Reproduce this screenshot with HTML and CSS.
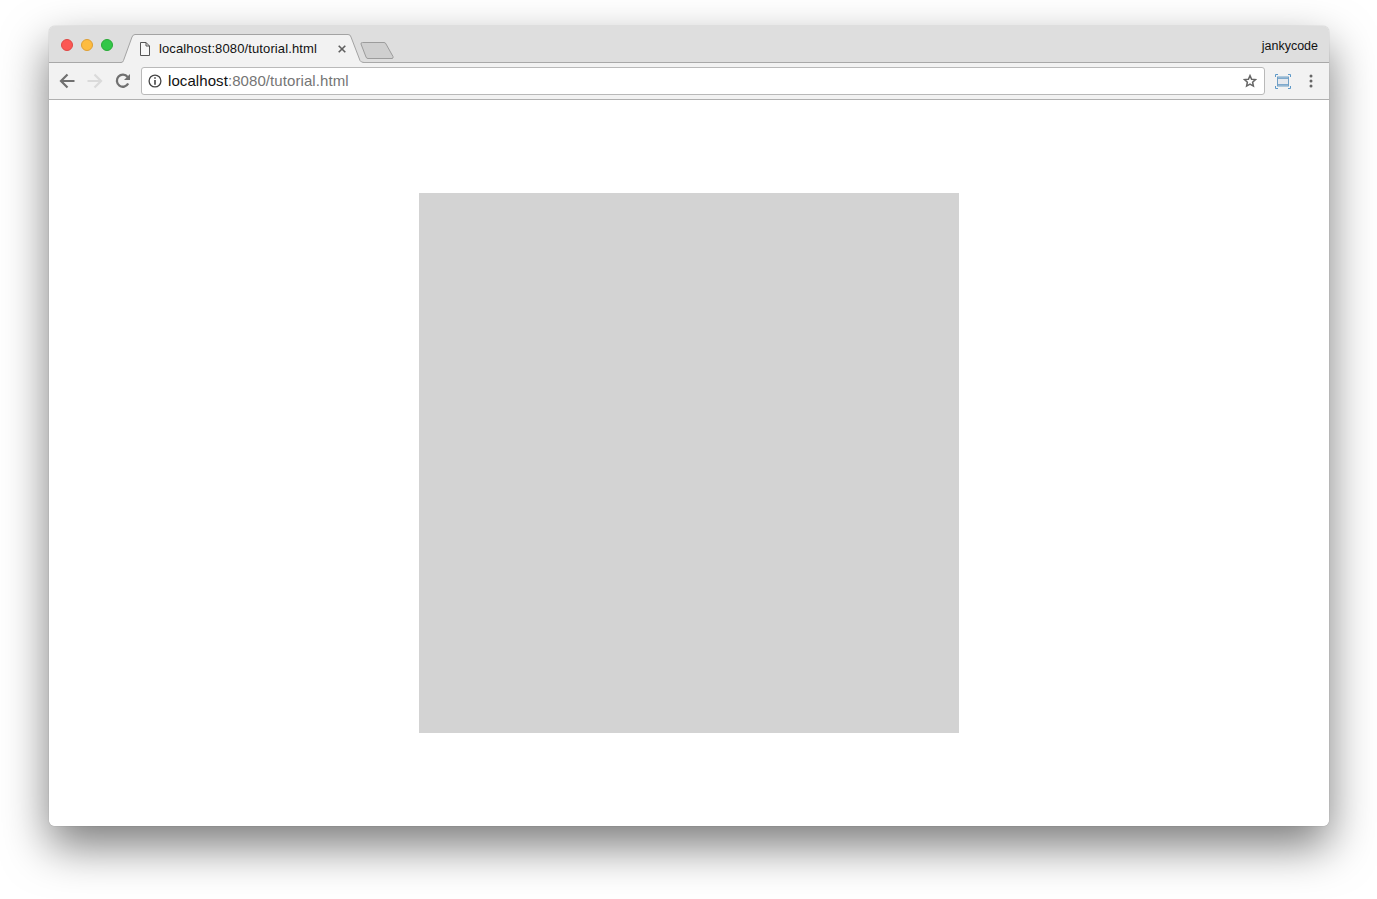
FILE: index.html
```html
<!DOCTYPE html>
<html lang="en">
<head>
    <meta charset="UTF-8">
    <meta name="viewport" content="width=device-width, initial-scale=1.0">
    <title>localhost:8080/tutorial.html</title>
    <link rel="stylesheet" href="styles.css">
</head>
<body>
    <div class="window">
        <div class="tabstrip">
            <div class="lights">
                <span class="light red"></span>
                <span class="light yellow"></span>
                <span class="light green"></span>
            </div>
            <div class="tab">
                <svg class="tab-shape" width="244" height="29" viewBox="0 0 244 29">
                    <path d="M0 28.5H1Q3 28.500 3.500 26.500L12 3Q13 .5 15 .5H228Q230.500 .5 231 3L240 26.500Q241 28.500 244 28.500V29H0Z" fill="#f2f2f2"/>
                    <path d="M0 28.500H1Q3 28.500 3.500 26.500L12 3Q13 .5 15 .5H228Q230.500 .5 231 3L240 26.500Q241 28.500 244 28.500" fill="none" stroke="#a3a3a3"/>
                </svg>
                <svg class="page-icon" width="10" height="14" viewBox="0 0 10 14">
                    <path d="M.5.5H6L9.500 4V13.500H.5ZM6 .5V4H9.500" fill="#f8f8f8" stroke="#555"/>
                </svg>
                <span class="tab-title">localhost:8080/tutorial.html</span>
                <svg class="tab-close" width="8" height="8" viewBox="0 0 8 8">
                    <path d="M.7.7 7.300 7.300M7.300.7.7 7.300" stroke="#5f5f5f" stroke-width="1.600"/>
                </svg>
            </div>
            <svg class="new-tab" width="34" height="17" viewBox="0 0 34 17">
                <path d="M1 2Q.7.5 2.500.5H24Q25.500.5 26 2L33 14.500Q33.500 16.500 32 16.500H8Q6.500 16.500 6 15Z" fill="#cfcfcf" stroke="#9c9c9c"/>
            </svg>
            <span class="profile">jankycode</span>
        </div>
        <div class="toolbar">
            <svg class="nav-icon" width="16" height="16" viewBox="0 0 16 16">
                <path d="M15.500 8H2M8.500 1.500 2 8l6.500 6.500" fill="none" stroke="#707070" stroke-width="2.200"/>
            </svg>
            <svg class="nav-icon" width="16" height="16" viewBox="0 0 16 16">
                <path d="M.5 8H14M7.500 1.500 14 8l-6.500 6.500" fill="none" stroke="#dadada" stroke-width="2.200"/>
            </svg>
            <svg class="nav-icon" width="16" height="16" viewBox="0 0 16 16">
                <path d="M13.200 10.500A6 6 0 1 1 12.600 4" fill="none" stroke="#707070" stroke-width="2.300"/>
                <path d="M15 1v6H9Z" fill="#707070"/>
            </svg>
            <div class="omnibox">
                <svg class="info-icon" width="14" height="14" viewBox="0 0 14 14">
                    <circle cx="7" cy="7" r="5.900" fill="none" stroke="#444" stroke-width="1.300"/>
                    <path d="M6.200 3.200h1.600v1.500H6.200ZM6.200 6h1.600v4.800H6.200Z" fill="#444"/>
                </svg>
                <span class="url"><span class="host">localhost</span>:8080/tutorial.html</span>
                <svg class="star-icon" width="14" height="14" viewBox="0 0 14 14">
                    <path d="M7 1.600 8.600 5.200l3.900.4-2.900 2.600.8 3.900L7 10.100l-3.400 2 .8-3.900-2.900-2.600 3.900-.4Z" fill="none" stroke="#666" stroke-width="1.500"/>
                </svg>
            </div>
            <svg class="cast-icon" width="16" height="15" viewBox="0 0 16 15">
                <rect x="2.500" y="3" width="11" height="9" fill="#e6e9ee" stroke="#6f9fc6"/>
                <rect x="3" y="3.500" width="10" height="1.500" fill="#7fa9cc"/>
                <rect x="3" y="10" width="10" height="1.500" fill="#7fa9cc"/>
                <path d="M.5 3V.5H3M13 .5h2.500V3M15.500 12v2.500H13M3 14.500H.5V12" fill="none" stroke="#5c98c8"/>
            </svg>
            <svg class="menu-icon" width="4" height="14" viewBox="0 0 4 14">
                <circle cx="2" cy="2" r="1.500" fill="#666"/>
                <circle cx="2" cy="7" r="1.500" fill="#666"/>
                <circle cx="2" cy="12" r="1.500" fill="#666"/>
            </svg>
        </div>
        <div class="content">
            <div class="square"></div>
        </div>
    </div>
</body>
</html>
```

FILE: styles.css
```css
html, body {
    margin: 0;
    height: 899px;
    overflow: hidden;
    background-color: #fff;
}
body {
    padding: 26px 48px 73px 49px;
    box-sizing: border-box;
    font-family: "Liberation Sans", Arial, sans-serif;
}
.window {
    height: 800px;
    border-radius: 6px;
    box-shadow: 0 20px 46px rgba(0, 0, 0, 0.52), 0 0 1px rgba(0, 0, 0, 0.4);
    background-color: #fff;
    display: flex;
    flex-direction: column;
}
.tabstrip {
    height: 37px;
    box-sizing: border-box;
    background-color: #dedede;
    border-bottom: 1px solid #a8a8a8;
    border-radius: 6px 6px 0 0;
    display: flex;
    align-items: flex-start;
    flex-shrink: 0;
}
.lights {
    display: flex;
    gap: 8px;
    padding: 13px 0 0 12px;
}
.light {
    width: 12px;
    height: 12px;
    border-radius: 50%;
    box-sizing: border-box;
}
.red {
    background-color: #fc5753;
    border: 1px solid #df4744;
}
.yellow {
    background-color: #fdbc40;
    border: 1px solid #de9f34;
}
.green {
    background-color: #33c748;
    border: 1px solid #27aa35;
}
.tab {
    position: relative;
    width: 244px;
    height: 29px;
    margin: 8px 0 0 7px;
    display: flex;
    align-items: center;
    font-size: 13px;
    letter-spacing: 0.12px;
    color: #111;
}
.tab-shape {
    position: absolute;
    left: 0;
    top: 0;
}
.page-icon {
    position: relative;
    margin: 1px 0 0 20px;
}
.tab-title {
    position: relative;
    margin-left: 9px;
    width: 179px;
    white-space: nowrap;
    padding-bottom: 1px;
}
.tab-close {
    position: relative;
    margin-top: 1px;
}
.new-tab {
    margin: 16px 0 0 -4px;
}
.profile {
    margin: 13px 11px 0 auto;
    font-size: 12.5px;
    color: #111;
}
.toolbar {
    height: 37px;
    box-sizing: border-box;
    background-color: #f2f2f2;
    border-bottom: 1px solid #b0b0b0;
    display: flex;
    align-items: center;
    padding: 0 16px 0 10px;
    flex-shrink: 0;
}
.nav-icon {
    margin-right: 12px;
    margin-top: -1px;
}
.omnibox {
    flex: 1;
    height: 28px;
    box-sizing: border-box;
    margin: -1px 10px 0 -2px;
    background-color: #fff;
    border: 1px solid #b9b9b9;
    border-radius: 3px;
    display: flex;
    align-items: center;
    padding: 0 7px 0 6px;
}
.url {
    margin-left: 6px;
    font-size: 15px;
    letter-spacing: 0.08px;
    color: #757575;
}
.host {
    color: #111;
}
.star-icon {
    margin-left: auto;
}
.cast-icon {
    margin-right: 18px;
}
.menu-icon {
    margin-top: -1px;
}
.content {
    flex: 1;
    background-color: #fff;
    border-radius: 0 0 6px 6px;
    padding-top: 93px;
    display: flex;
    justify-content: center;
    align-items: flex-start;
}
.square {
    width: 540px;
    height: 540px;
    background-color: #d3d3d3;
}
```
